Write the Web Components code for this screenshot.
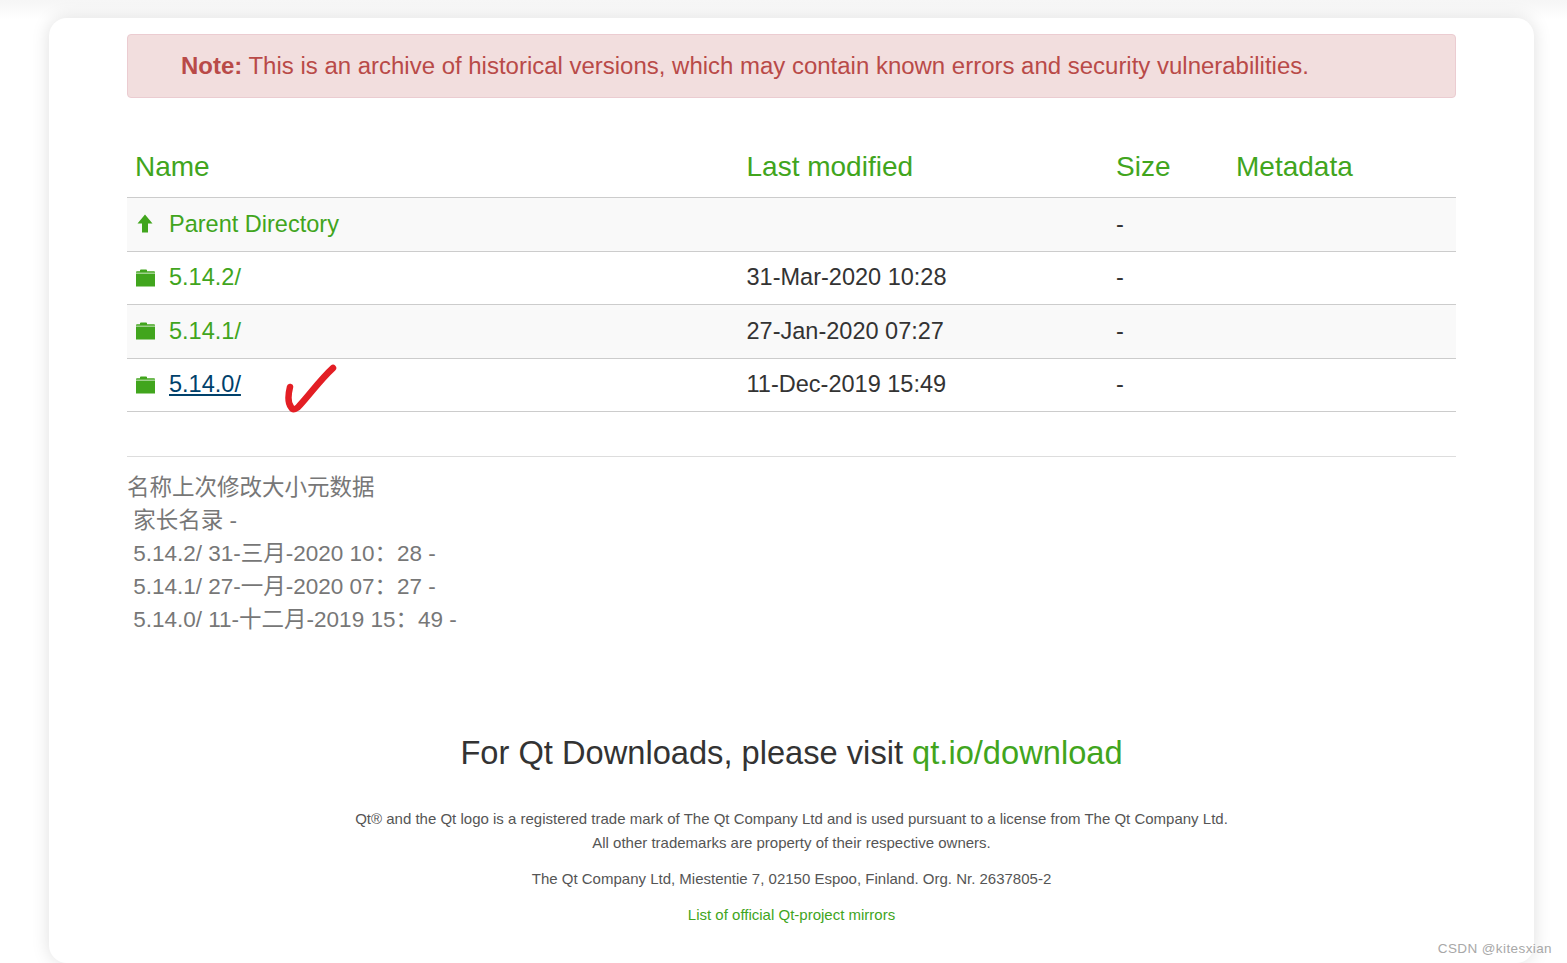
<!DOCTYPE html>
<html lang="en">
<head>
<meta charset="utf-8">
<title>Index of /archive/qt/5.14</title>
<style>
html, body{
    margin: 0;
    height: 100%;
    background-color: #fff;
    overflow: hidden;
}
body{
    font-family: "Liberation Sans", "Noto Sans CJK SC", sans-serif;
    color: #333;
}
</style>
</head>
<body>
<qt-page>
    <qt-alert><b>Note:</b> This is an archive of historical versions, which may contain known errors and security vulnerabilities.</qt-alert>
    <qt-listing>
        <qt-row head>
            <span>Name</span>
            <span slot="modified">Last modified</span>
            <span slot="size">Size</span>
            <span slot="meta">Metadata</span>
        </qt-row>
        <qt-row icon="up" shaded>
            Parent Directory
            <span slot="size">-</span>
        </qt-row>
        <qt-row icon="folder">
            5.14.2/
            <span slot="modified">31-Mar-2020 10:28</span>
            <span slot="size">-</span>
        </qt-row>
        <qt-row icon="folder" shaded>
            5.14.1/
            <span slot="modified">27-Jan-2020 07:27</span>
            <span slot="size">-</span>
        </qt-row>
        <qt-row icon="folder" hovered>
            5.14.0/
            <span slot="modified">11-Dec-2019 15:49</span>
            <span slot="size">-</span>
            <qt-check slot="mark"></qt-check>
        </qt-row>
    </qt-listing>
    <qt-translation>
        <div class="flush">名称上次修改大小元数据</div>
        <div>家长名录 -</div>
        <div>5.14.2/ 31-三月-2020 10：28 -</div>
        <div>5.14.1/ 27-一月-2020 07：27 -</div>
        <div>5.14.0/ 11-十二月-2019 15：49 -</div>
    </qt-translation>
    <qt-footer></qt-footer>
</qt-page>
<qt-watermark>CSDN @kitesxian</qt-watermark>

<script>
const green = '#41a51d'

class QtPage extends HTMLElement {
    constructor() {
        super()
        this._shadowDom = this.attachShadow({ mode: 'open' })
    }
    connectedCallback() {
        this._shadowDom.innerHTML = `
        <style>
            :host{
                display: block;
                height: 963px;
                box-sizing: border-box;
                padding: 18px 33px 0 49px;
                background: linear-gradient(#f6f6f6 0, #f8f8f8 6px, #fff 20px);
                overflow: hidden;
            }
            .card{
                height: 945px;
                box-sizing: border-box;
                padding: 16px 78px 0;
                background-color: #fff;
                border-radius: 18px;
                box-shadow: 0 0 18px rgba(0,0,0,.13);
            }
        </style>
        <div class="card"><slot></slot></div>
        `
    }
}

class QtAlert extends HTMLElement {
    constructor() {
        super()
        this.attachShadow({ mode: 'open' }).innerHTML = `
        <style>
            :host{
                display: block;
                box-sizing: border-box;
                height: 64px;
                padding: 0 53px;
                line-height: 62px;
                font-size: 23.98px;
                color: #b94a48;
                background-color: #f2dede;
                border: 1px solid #ebccd1;
                border-radius: 4px;
            }
        </style>
        <slot></slot>
        `
    }
}

class QtListing extends HTMLElement {
    constructor() {
        super()
        this.attachShadow({ mode: 'open' }).innerHTML = `
        <style>
            :host{
                display: block;
                margin-top: 42px;
            }
        </style>
        <slot></slot>
        `
    }
}

const icons = {
    up: `<svg width="20" height="20" viewBox="0 0 20 20"><path fill="${green}" d="M10 0.500 L17.500 9.500 H13 V18.500 H7 V9.500 H2.500 Z"/></svg>`,
    folder: `<svg width="20" height="18" viewBox="0 0 20 18"><path fill="${green}" d="M5 1.300 Q5 .5 6 .5 H11 Q12 .5 12 1.300 V2.300 H19 Q20 2.300 20 3.300 V3.800 H1 V3.300 Q1 2.300 2 2.300 H5 Z M1 4.600 H20 V17.500 H1 Z"/></svg>`
}

class QtRow extends HTMLElement {
    constructor() {
        super()
        this._shadowDom = this.attachShadow({ mode: 'open' })
    }
    connectedCallback() {
        const icon = this.getAttribute('icon')
        this._shadowDom.innerHTML = `
        <style>
            :host{
                display: grid;
                grid-template-columns: 611.5px 369.500px 120px 1fr;
                position: relative;
                box-sizing: border-box;
                height: 53.6px;
                align-items: center;
                padding-left: 8px;
                padding-bottom: .6px;
                font-size: 23.52px;
                color: #333;
                border-bottom: 1px solid #ccc;
            }
            :host([head]){
                height: 58px;
                font-size: 28px;
                color: ${green};
                padding-bottom: 3px;
            }
            :host([shaded]){
                background-color: #f9f9f9;
            }
            .name{
                display: flex;
                align-items: center;
                gap: 14px;
                color: ${green};
            }
            :host([hovered]) .name a{
                color: #00416b;
                text-decoration: underline;
            }
            svg{
                display: block;
                flex: none;
            }
        </style>
        <div class="name">${icon ? icons[icon] : ''}<a><slot></slot></a></div>
        <div><slot name="modified"></slot></div>
        <div><slot name="size"></slot></div>
        <div><slot name="meta"></slot></div>
        <slot name="mark"></slot>
        `
    }
}

class QtCheck extends HTMLElement {
    constructor() {
        super()
        this.attachShadow({ mode: 'open' }).innerHTML = `
        <style>
            :host{
                position: absolute;
                left: 157px;
                top: 5px;
                width: 54px;
                height: 50px;
            }
            svg{
                display: block;
            }
        </style>
        <svg width="54" height="50" viewBox="0 0 54 50">
            <path fill="none" stroke="#e31e24" stroke-width="6.500" stroke-linecap="round" stroke-linejoin="round"
                d="M6 23 C4 31 4 39 7 43 C9 47 13 45 16 41 C27 29 36 16 49 4"/>
        </svg>
        `
    }
}

class QtTranslation extends HTMLElement {
    constructor() {
        super()
        this.attachShadow({ mode: 'open' }).innerHTML = `
        <style>
            :host{
                display: block;
                margin-top: 43.6px;
                padding-top: 14.500px;
                border-top: 1px solid #ddd;
                font-size: 22.5px;
                line-height: 33px;
                color: #777;
                font-family: "Liberation Sans", "Noto Sans CJK SC", sans-serif;
            }
            ::slotted(div){
                padding-left: 6.2px;
            }
            ::slotted(.flush){
                padding-left: 0;
            }
        </style>
        <slot></slot>
        `
    }
}

class QtFooter extends HTMLElement {
    constructor() {
        super()
        this.attachShadow({ mode: 'open' }).innerHTML = `
        <style>
            :host{
                display: block;
                margin-top: 94.500px;
                text-align: center;
                font-size: 15px;
                line-height: 24px;
                color: #555;
            }
            h3{
                margin: 0 0 32px;
                font-size: 32.65px;
                line-height: 44px;
                font-weight: 400;
                color: #333;
            }
            a{
                color: ${green};
            }
            p{
                margin: 0 0 12px;
            }
        </style>
        <h3>For Qt Downloads, please visit <a>qt.io/download</a></h3>
        <p>Qt® and the Qt logo is a registered trade mark of The Qt Company Ltd and is used pursuant to a license from The Qt Company Ltd.<br>All other trademarks are property of their respective owners.</p>
        <p>The Qt Company Ltd, Miestentie 7, 02150 Espoo, Finland. Org. Nr. 2637805-2</p>
        <p><a>List of official Qt-project mirrors</a></p>
        `
    }
}

class QtWatermark extends HTMLElement {
    constructor() {
        super()
        this.attachShadow({ mode: 'open' }).innerHTML = `
        <style>
            :host{
                position: absolute;
                right: 15px;
                top: 940px;
                font-size: 13.5px;
                line-height: 18px;
                color: #a8a8a8;
                letter-spacing: .4px;
                font-family: "Liberation Sans", sans-serif;
            }
        </style>
        <slot></slot>
        `
    }
}

window.customElements.define('qt-page', QtPage)
window.customElements.define('qt-alert', QtAlert)
window.customElements.define('qt-listing', QtListing)
window.customElements.define('qt-row', QtRow)
window.customElements.define('qt-check', QtCheck)
window.customElements.define('qt-translation', QtTranslation)
window.customElements.define('qt-footer', QtFooter)
window.customElements.define('qt-watermark', QtWatermark)
</script>
</body>
</html>
